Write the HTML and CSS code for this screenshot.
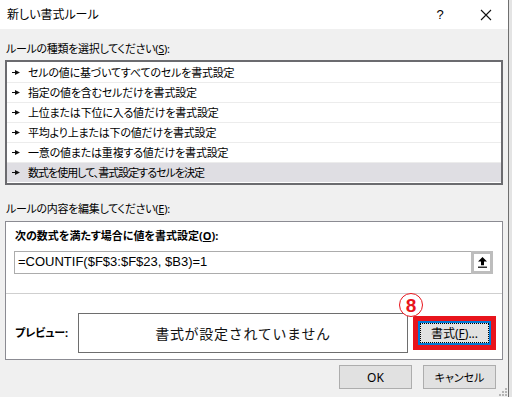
FILE: index.html
```html
<!DOCTYPE html>
<html lang="ja">
<head>
<meta charset="utf-8">
<title>新しい書式ルール</title>
<link rel="stylesheet" href="styles.css">
</head>
<body>
<div class="dialog">
  <div class="titlebar">
    <span class="title">新しい書式ルール</span>
    <span class="help">?</span>
    <span class="close"><svg width="12" height="12" viewBox="0 0 12 12"><path d="M1 1L11 11M11 1L1 11" stroke="#111" stroke-width="1.1" fill="none"/></svg></span>
  </div>
  <div class="content">
    <div class="label l1">ルールの種類を選択してください(<u>S</u>):</div>
    <ul class="rules">
      <li><svg class="arr" width="8" height="5" viewBox="0 0 8 5"><path d="M0 1.9H3.5V3.1H0Z M3 0L8 2.5L3 5Z" fill="#111"/></svg>セルの値に基づいてすべてのセルを書式設定</li>
      <li><svg class="arr" width="8" height="5" viewBox="0 0 8 5"><path d="M0 1.9H3.5V3.1H0Z M3 0L8 2.5L3 5Z" fill="#111"/></svg>指定の値を含むセルだけを書式設定</li>
      <li><svg class="arr" width="8" height="5" viewBox="0 0 8 5"><path d="M0 1.9H3.5V3.1H0Z M3 0L8 2.5L3 5Z" fill="#111"/></svg>上位または下位に入る値だけを書式設定</li>
      <li><svg class="arr" width="8" height="5" viewBox="0 0 8 5"><path d="M0 1.9H3.5V3.1H0Z M3 0L8 2.5L3 5Z" fill="#111"/></svg>平均より上または下の値だけを書式設定</li>
      <li><svg class="arr" width="8" height="5" viewBox="0 0 8 5"><path d="M0 1.9H3.5V3.1H0Z M3 0L8 2.5L3 5Z" fill="#111"/></svg>一意の値または重複する値だけを書式設定</li>
      <li class="sel"><svg class="arr" width="8" height="5" viewBox="0 0 8 5"><path d="M0 1.9H3.5V3.1H0Z M3 0L8 2.5L3 5Z" fill="#111"/></svg>数式を使用して、書式設定するセルを決定</li>
    </ul>
    <div class="label l2">ルールの内容を編集してください(<u>E</u>):</div>
    <div class="group">
      <div class="top">
        <div class="heading">次の数式を満たす場合に値を書式設定(<u>O</u>):</div>
        <div class="inputrow">
          <div class="field">=COUNTIF($F$3:$F$23, $B3)=1</div>
          <div class="refbtn"><svg width="9" height="11" viewBox="0 0 9 11"><path d="M4.5 0L9 4.5H6V8.2H3V4.5H0Z" fill="#000"/><rect x="0" y="9.6" width="9" height="1.2" fill="#000"/></svg></div>
        </div>
      </div>
      <div class="preview">
        <span class="plabel">プレビュー:</span>
        <div class="pbox">書式が設定されていません</div>
        <div class="hl">
          <span class="badge">8</span>
          <button class="fmt"><span>書式(<u>F</u>)...</span></button>
        </div>
      </div>
    </div>
    <div class="buttons">
      <button class="btn">OK</button>
      <button class="btn jp">キャンセル</button>
    </div>
  </div>
  <svg class="grip" width="8" height="8" viewBox="0 0 8 8"><g fill="#b5b5b5"><rect x="6" y="0" width="2" height="2"/><rect x="3" y="3" width="2" height="2"/><rect x="6" y="3" width="2" height="2"/><rect x="0" y="6" width="2" height="2"/><rect x="3" y="6" width="2" height="2"/><rect x="6" y="6" width="2" height="2"/></g></svg>
</div>
</body>
</html>
```

FILE: styles.css
```css
* {
  box-sizing: border-box;
  margin: 0;
  padding: 0;
}

html, body {
  width: 512px;
  height: 397px;
  overflow: hidden;
}

body {
  background: #e4e4e4;
  font-family: "Noto Sans", "Noto Sans CJK JP", sans-serif;
  font-size: 12px;
  color: #000;
  font-feature-settings: "palt";
}

.dialog {
  position: relative;
  width: 509px;
  height: 397px;
  background: #f0f0f0;
  border-right: 1px solid #6f6f6f;
  display: flex;
  flex-direction: column;
}

.titlebar {
  height: 29px;
  flex: none;
  background: #fff;
  display: flex;
  align-items: center;
  padding: 0 16px 0 7px;
}

.title {
  flex: 1;
  line-height: 16px;
}

.help {
  width: 8px;
  text-align: center;
  margin-right: 36px;
  line-height: 16px;
  font-family: "Liberation Sans", sans-serif;
  font-size: 13px;
}

.close {
  width: 12px;
  height: 12px;
  display: flex;
}

.content {
  flex: 1;
  display: flex;
  flex-direction: column;
  padding: 0 5px;
}

.label {
  line-height: 16px;
  padding-left: 1px;
  font-size: 11px;
  letter-spacing: -0.3px;
}

.l1 {
  height: 31px;
  padding-top: 12px;
}

.l2 {
  height: 36px;
  padding-top: 16px;
}

.rules {
  list-style: none;
  background: #fff;
  border: 2px solid #6b6b6f;
  padding-top: 1px;
}

.rules li {
  height: 20px;
  border-bottom: 1px solid #ececec;
  display: flex;
  align-items: center;
  padding-left: 5px;
  line-height: 16px;
  white-space: nowrap;
  font-size: 11px;
  letter-spacing: -0.2px;
}

.rules li.sel {
  background: #dfdee3;
  border-bottom-color: #fff;
  letter-spacing: -1px;
}

.arr {
  flex: none;
  margin-right: 8px;
}

.group {
  background: #fff;
  border: 1px solid #8b8b92;
}

.top {
  height: 72px;
  border-bottom: 1px solid #cfcfcf;
  padding: 6px 9px 0 8px;
}

.heading {
  line-height: 16px;
  font-weight: bold;
  padding-left: 1px;
  font-size: 11px;
  letter-spacing: 0;
}

.inputrow {
  margin-top: 7px;
  height: 23px;
  display: flex;
}

.field {
  flex: 1;
  border: 1px solid #acacac;
  border-right: none;
  padding-left: 3px;
  font-family: "Liberation Sans", sans-serif;
  font-size: 13px;
  line-height: 20px;
  font-feature-settings: normal;
}

.refbtn {
  width: 22px;
  height: 23px;
  border: 3px solid #bdbdbd;
  background: #fff;
  display: flex;
  align-items: center;
  justify-content: center;
}

.preview {
  height: 65px;
  display: flex;
  align-items: flex-start;
  padding: 19px 0 0 9px;
}

.plabel {
  width: 63px;
  margin-top: 12px;
  font-weight: bold;
  line-height: 16px;
  font-size: 11px;
  letter-spacing: -0.1px;
}

.pbox {
  width: 330px;
  height: 40px;
  border: 1px solid #6e6e6e;
  display: flex;
  align-items: center;
  justify-content: center;
  font-size: 14px;
  letter-spacing: 0.7px;
  font-feature-settings: normal;
  color: #111;
}

.hl {
  position: relative;
  margin: 3px 0 0 5px;
  width: 83px;
  height: 34px;
  border: 5px solid #e8141c;
}

.badge {
  position: absolute;
  left: -19px;
  top: -28px;
  width: 24px;
  height: 24px;
  border: 1.5px solid #e8141c;
  border-radius: 50%;
  background: #fff;
  color: #e8141c;
  font-family: "Liberation Sans", sans-serif;
  font-weight: bold;
  font-size: 19px;
  line-height: 1;
  display: flex;
  align-items: center;
  justify-content: center;
}

.fmt {
  width: 73px;
  height: 24px;
  border: 2px solid #0078d7;
  background: #e1e1e1;
  font: inherit;
  color: #000;
  display: flex;
  align-items: center;
  justify-content: center;
  outline: 1px dotted #000;
  outline-offset: -3px;
}

.buttons {
  display: flex;
  justify-content: flex-end;
  gap: 11px;
  margin-top: 5px;
  padding-right: 7px;
}

.btn {
  width: 73px;
  height: 24px;
  border: 1px solid #adadad;
  background: #e1e1e1;
  font: inherit;
  color: #000;
}

.btn.jp {
  font-size: 11px;
}

.grip {
  position: absolute;
  right: 1px;
  bottom: 1px;
}
```
